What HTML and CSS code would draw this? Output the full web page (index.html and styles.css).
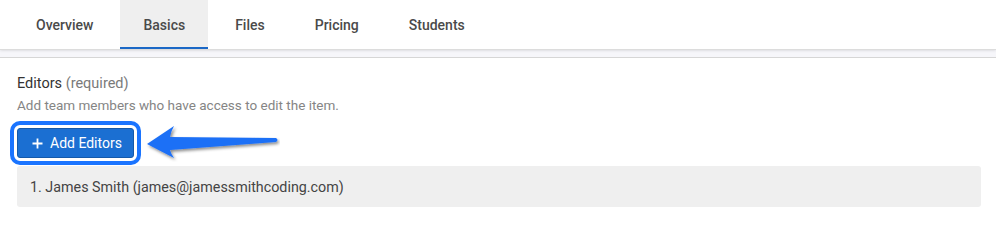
FILE: index.html
```html
<!DOCTYPE html>
<html lang="en">
<head>
<meta charset="utf-8">
<title>Basics</title>
<link rel="stylesheet" href="styles.css">
</head>
<body>
<div class="topbar">
  <nav class="tabs">
    <a class="tab">Overview</a>
    <a class="tab active">Basics</a>
    <a class="tab">Files</a>
    <a class="tab">Pricing</a>
    <a class="tab">Students</a>
  </nav>
</div>
<div class="band"></div>
<main class="content">
  <div class="label">Editors <span class="req">(required)</span></div>
  <div class="help">Add team members who have access to edit the item.</div>
  <div class="actions">
    <button class="btn">
      <svg class="plus" width="11" height="11" viewBox="0 0 11 11"><path d="M5.5 0.5V10.5M0.5 5.5H10.5" stroke="#fff" stroke-width="1.8"/></svg>
      Add Editors
    </button>
    <svg class="arrow" width="140" height="40" viewBox="140 122 140 40">
      <defs>
        <filter id="sh" x="-10%" y="-30%" width="130%" height="180%">
          <feDropShadow dx="1.5" dy="2" stdDeviation="1.5" flood-color="#000" flood-opacity="0.45"/>
        </filter>
      </defs>
      <path filter="url(#sh)" fill="#1c6ff6" d="M147,144 L174,126 Q171,131 170,137 L276,138 Q279,140 276,142 L170,150 Q171,154 174,158 Z"/>
    </svg>
  </div>
  <div class="list">1. James Smith (james@jamessmithcoding.com)</div>
</main>
</body>
</html>
```
FILE: styles.css
```css
html, body {
  margin: 0;
  padding: 0;
  background: #fff;
  font-family: Roboto, "Liberation Sans", Arial, sans-serif;
}
.topbar {
  background: #fff;
  height: 50px;
  box-shadow: 0 0 3px rgba(0, 0, 0, 0.18);
  border-bottom: 1px solid #dcdcdc;
  box-sizing: border-box;
  position: relative;
}
.tabs {
  display: flex;
  gap: 4px;
  padding-left: 13px;
  height: 49px;
}
.tab {
  display: flex;
  align-items: center;
  padding: 2px 23px 0;
  box-sizing: border-box;
  height: 49px;
  font-size: 14px;
  font-weight: 500;
  color: #4a4a4a;
  border-bottom: 2px solid transparent;
  cursor: pointer;
}
.tab.active {
  background: #efefef;
  border-bottom-color: #1b68c6;
}
.band {
  height: 7px;
  background: #f6f6fa;
  border-bottom: 1px solid #d6d6d6;
}
.content {
  padding: 16px 15px 0 17px;
}
.label {
  font-size: 14.5px;
  line-height: 20px;
  color: #333;
}
.req {
  color: #7a7a7a;
}
.help {
  font-size: 13.5px;
  line-height: 20px;
  color: #858585;
  margin-top: 1px;
}
.actions {
  display: flex;
  align-items: center;
  margin-top: 13px;
  height: 30px;
  position: relative;
}
.btn {
  display: flex;
  align-items: center;
  gap: 7px;
  height: 30px;
  width: 117px;
  padding: 0 0 0 14px;
  background: #1b6fd2;
  border: 1px solid #1459aa;
  border-radius: 3px;
  color: #fff;
  font-family: Roboto, "Liberation Sans", Arial, sans-serif;
  font-size: 14px;
  outline: 4px solid #1a74ff;
  outline-offset: 3px;
  box-sizing: border-box;
}
.arrow {
  position: absolute;
  left: 123px;
  top: -6px;
}
.list {
  margin-top: 8px;
  height: 41px;
  display: flex;
  align-items: center;
  padding-left: 13px;
  background: #efefef;
  border-radius: 3px;
  font-size: 14.3px;
  color: #444;
}
```
